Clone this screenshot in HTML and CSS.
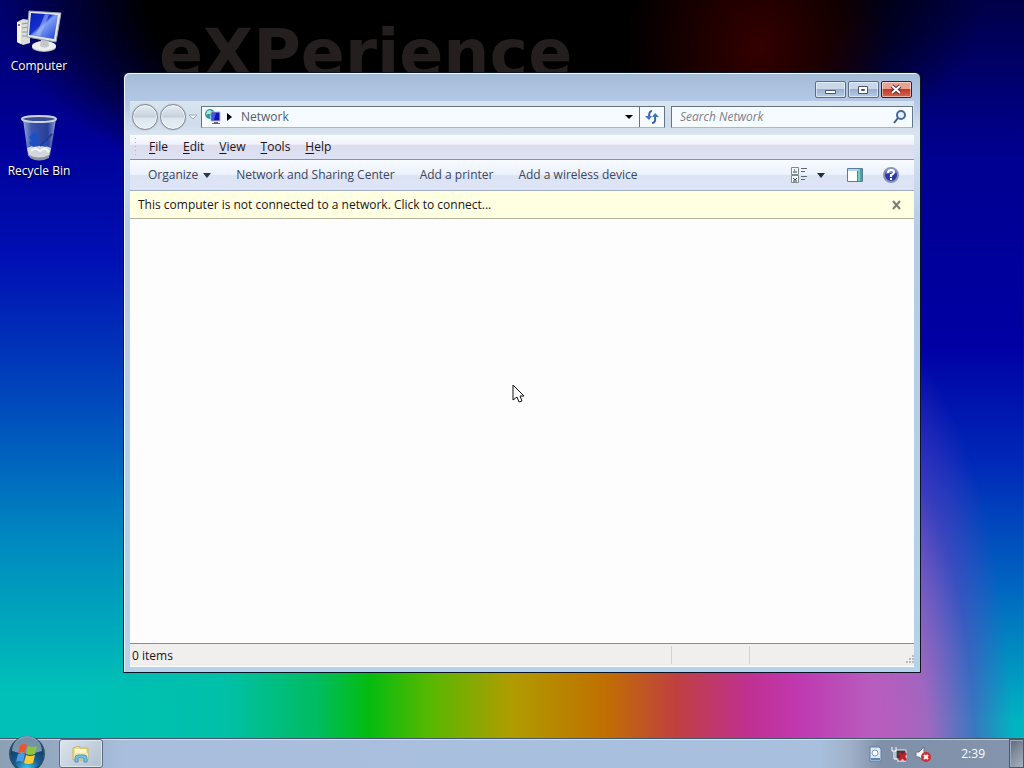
FILE: index.html
```html
<!DOCTYPE html>
<html lang="en">
<head>
  <meta charset="UTF-8" />
  <meta name="viewport" content="width=device-width, initial-scale=1.0"/>
  <title>Network</title>
  <link rel="stylesheet" href="styles.css">
</head>
<body>

  <main class="desktop">
    <div class="wordmark">eXPerience</div>

    <!-- Desktop icons -->
    <nav class="shortcuts">
      <a class="shortcut" href="#computer">
        <svg width="48" height="48" viewBox="0 0 48 48">
          <defs>
            <linearGradient id="screen" x1="0" y1="0" x2="1" y2="1">
              <stop offset="0" stop-color="#0a1cb0"/>
              <stop offset=".42" stop-color="#1430d0"/>
              <stop offset=".5" stop-color="#7fa0f4"/>
              <stop offset="1" stop-color="#1a3ad8"/>
            </linearGradient>
          </defs>
          <path d="M2 12l6-3 7 1v23l-7 2-6-3z" fill="#d9dcda"/>
          <path d="M2 12l4 1v21l-4-2z" fill="#f4f4ee"/>
          <path d="M7 14l6-1M7 18l6-1M7 22h6M7 26h6" stroke="#94989c"/>
          <circle cx="4" cy="15" r="1" fill="#444"/>
          <ellipse cx="29" cy="37" rx="12" ry="5" fill="#a9adb2"/>
          <ellipse cx="29" cy="36" rx="12" ry="5" fill="#eceeed"/>
          <path d="M26 29h7l1 7q-4 3-9 0z" fill="#c3c7ca"/>
          <path d="M14 1l32 2-5 29-29-5z" fill="#e4e7e8" stroke="#9ba0a8"/>
          <path d="M16 3l27 2-4 24-25-4z" fill="url(#screen)"/>
          <path d="M30 4l4 1-9 21-4-1z" fill="#a9c0f8" opacity=".55"/>
        </svg>
        <span>Computer</span>
      </a>
      <a class="shortcut" href="#recycle">
        <svg width="48" height="48" viewBox="0 0 48 48">
          <defs>
            <linearGradient id="bin">
              <stop offset="0" stop-color="#a8bce4"/>
              <stop offset=".25" stop-color="#4460b4"/>
              <stop offset=".75" stop-color="#2c4698"/>
              <stop offset="1" stop-color="#a0b2dc"/>
            </linearGradient>
          </defs>
          <path d="M8 4l5 37q11 6 22 0l6-37z" fill="url(#bin)" opacity=".9"/>
          <path d="M12 33q12-6 24 0l-2 8q-10 6-20 0z" fill="#d3d6dc"/>
          <path d="M14 40q10 5 20 0v3q-10 5-19 0z" fill="#8f959e"/>
          <path d="M16 36l4-3 5 3 5-3 4 4" fill="none" stroke="#f4f5f7" stroke-width="2"/>
          <path d="M14 22l5-5 6 5-3 3 3 6-7 1-4-4 3-2zM26 27l5-4 3 4-3 5-5-1z" fill="#1d50c4"/>
          <path d="M37 19L25 31" stroke="#203c90" stroke-width="2"/>
          <ellipse cx="24" cy="4" rx="17" ry="3" fill="#3a4f90" stroke="#cfd3da" stroke-width="2"/>
        </svg>
        <span>Recycle Bin</span>
      </a>
    </nav>

    <!-- Explorer window -->
    <section class="window">
      <header class="titlebar">
        <button class="caption" type="button" aria-label="Minimize">
          <svg width="30" height="16" viewBox="0 0 30 16"><path d="M10.500 8.500h10v3h-10z" fill="#fff" stroke="#4a5468"/></svg>
        </button>
        <button class="caption" type="button" aria-label="Maximize">
          <svg width="30" height="16" viewBox="0 0 30 16"><path d="M10.500 4.500h9v7h-9zM13.500 7.500v1h3v-1z" fill="#fff" fill-rule="evenodd" stroke="#4a5468"/></svg>
        </button>
        <button class="caption close" type="button" aria-label="Close">
          <svg width="30" height="16" viewBox="0 0 30 16"><path d="M11 4l8 7M19 4l-8 7" stroke="#5a2a30" stroke-width="4"/><path d="M11 4l8 7M19 4l-8 7" stroke="#fff" stroke-width="2"/></svg>
        </button>
      </header>

      <div class="pane">
        <form class="navbar">
          <div class="history">
            <button class="round" type="button" aria-label="Back"></button>
            <button class="round" type="button" aria-label="Forward"></button>
            <button class="plain" type="button" aria-label="Recent pages">
              <svg width="10" height="8" viewBox="0 0 10 8"><path d="M1 2h8L5 6z" fill="#eef3f7" stroke="#a3afba"/></svg>
            </button>
          </div>
          <div class="address">
            <svg width="18" height="18" viewBox="0 0 18 18">
              <circle cx="6" cy="6" r="5" fill="#2a9aa8"/>
              <path d="M3 3l3-1 2 2-2 2H4l-2 1zM6 8l3-1 1 2-3 2z" fill="#a8ecc8"/>
              <path d="M7 4h9v9H7z" fill="#1414b4" stroke="#b8c0d4"/>
              <path d="M8 5h4l-2 7H8z" fill="#3a58e8"/>
              <path d="M10 14h4v1h2v1H8v-1h2z" fill="#667"/>
            </svg>
            <button class="plain" type="button" aria-label="Locations">
              <svg width="14" height="14" viewBox="0 0 14 14"><path d="M5 3l5 4-5 4z" fill="#000"/></svg>
            </button>
            <a class="crumb" href="#network">Network</a>
            <button class="plain drop" type="button" aria-label="Previous locations">
              <svg width="12" height="12" viewBox="0 0 12 12"><path d="M2 4h8L6 8z" fill="#000"/></svg>
            </button>
            <button class="plain refresh" type="button" aria-label="Refresh">
              <svg width="16" height="16" viewBox="0 0 16 16"><path d="M8 2Q5 2 5 8M8 14q4 0 3-6" fill="none" stroke="#3a62a0" stroke-width="2"/><path d="M1 7h7l-3 4zM8 8h7l-4-4z" fill="#3f74b8"/></svg>
            </button>
          </div>
          <div class="search">
            <input type="text" id="search" placeholder="Search Network" aria-label="Search Network">
            <button class="plain" type="button" aria-label="Search">
              <svg width="16" height="16" viewBox="0 0 16 16"><circle cx="9" cy="6" r="4" fill="#e8f2fc" stroke="#46689c" stroke-width="2"/><path d="M6 9l-4 5" stroke="#3c5a88" stroke-width="2"/></svg>
            </button>
          </div>
        </form>

        <nav class="menubar">
          <button type="button"><u>F</u>ile</button>
          <button type="button"><u>E</u>dit</button>
          <button type="button"><u>V</u>iew</button>
          <button type="button"><u>T</u>ools</button>
          <button type="button"><u>H</u>elp</button>
        </nav>

        <div class="toolbar">
          <button type="button">Organize
            <svg width="8" height="5" viewBox="0 0 8 5"><path d="M0 0h8L4 5z" fill="#26364f"/></svg>
          </button>
          <button type="button">Network and Sharing Center</button>
          <button type="button">Add a printer</button>
          <button type="button">Add a wireless device</button>
          <div class="tools">
            <button type="button" aria-label="Change your view">
              <svg width="16" height="16" viewBox="0 0 16 16">
                <path d="M.5.5h7v7h-7zM.5 8.500h7v7h-7z" fill="#f4f8f6" stroke="#7b8c8c"/>
                <path d="M2 5h4M3 3h1M2 11l2 2 2-2M2 14h4" stroke="#333f4c" fill="none"/>
                <path d="M10 1.500h6M10 4.500h4M10 9.500h6M10 12.500h4" stroke="#5a6878"/>
              </svg>
            </button>
            <button type="button" aria-label="More options">
              <svg width="8" height="5" viewBox="0 0 8 5"><path d="M0 0h8L4 5z" fill="#1c2c44"/></svg>
            </button>
            <button class="preview" type="button" aria-label="Show the preview pane">
              <svg width="16" height="14" viewBox="0 0 16 14"><path d="M.5.5h15v13H.5z" fill="#fff" stroke="#5b7c98"/><path d="M1 1h14v2H1z" fill="#b9d2e4"/><path d="M10.500 3v10" stroke="#5b7c98"/><path d="M11 1h4v12h-4z" fill="#7accc4"/><path d="M13 1h2v12h-2z" fill="#48a4a4"/></svg>
            </button>
            <button type="button" aria-label="Get help">
              <svg width="16" height="16" viewBox="0 0 16 16"><circle cx="8" cy="8" r="7" fill="#2a3ca8" stroke="#8994b8" stroke-width="2"/><path d="M3 7a5 5 0 0110-1Q8 5 3 7z" fill="#7c90e0"/><path d="M5 6q0-3 3-3t3 2q0 2-3 3v2M8 11v2" fill="none" stroke="#fff" stroke-width="2"/></svg>
            </button>
          </div>
        </div>

        <div class="infobar">
          <a href="#connect">This computer is not connected to a network. Click to connect...</a>
          <button class="plain" type="button" aria-label="Dismiss">
            <svg width="10" height="10" viewBox="0 0 10 10"><path d="M1 1l7 8M8 1L1 9" stroke="#7d7d72" stroke-width="2"/></svg>
          </button>
        </div>

        <div class="files"></div>

        <footer class="statusbar">
          <span>0 items</span>
          <span></span>
          <span class="grip">
            <svg width="9" height="9" viewBox="0 0 9 9"><path d="M7 0h2v2H7zM4 3h2v2H4zM7 3h2v2H7zM1 6h2v2H1zM4 6h2v2H4zM7 6h2v2H7z" fill="#bdb9b9"/></svg>
          </span>
        </footer>
      </div>
    </section>

    <svg class="pointer" width="14" height="20" viewBox="0 0 14 20"><path d="M1 1v15l4-3 2 5 3-1-2-5h4z" fill="#fff" stroke="#111"/></svg>
  </main>

  <!-- Taskbar -->
  <footer class="taskbar">
    <button class="start" type="button" aria-label="Start">
      <svg width="38" height="38" viewBox="0 0 38 38">
        <defs>
          <radialGradient id="orb" cx=".5" cy=".95" r=".85">
            <stop offset="0" stop-color="#3cd0f0"/>
            <stop offset=".45" stop-color="#1a5c94"/>
            <stop offset="1" stop-color="#123054"/>
          </radialGradient>
        </defs>
        <circle cx="19" cy="19" r="17" fill="url(#orb)" stroke="#24506c" stroke-width="2"/>
        <path d="M4 16a15 15 0 0130 0q-15 5-30 0z" fill="#c8dcea" opacity=".55"/>
        <path d="M12 10q4-2 7 0l-2 8q-3-2-7 0z" fill="#e8582c"/>
        <path d="M20 11q4 2 9 0l-2 8q-5 2-9 0z" fill="#8cc43c"/>
        <path d="M10 19q4-2 7 0l-2 8q-4-2-7 0z" fill="#4c9ce4"/>
        <path d="M18 20q4 2 9 0l-2 8q-5 2-9 0z" fill="#fccc34"/>
      </svg>
    </button>
    <button class="task" type="button" aria-label="Explorer">
      <svg width="18" height="18" viewBox="0 0 18 18">
        <path d="M1 3l6-2 1 2h8v12H1z" fill="#f0dc8c" stroke="#cdb560"/>
        <path d="M3 4h11v4H3z" fill="#fff8cc"/>
        <path d="M2 8h14v6H2z" fill="#f8e69c"/>
        <path d="M3 17v-4q0-3 3-3h6q3 0 3 3v4h-3v-4H6v4z" fill="#74c0e4" stroke="#4a98c4"/>
      </svg>
    </button>
    <div class="tray">
      <svg width="16" height="16" viewBox="0 0 16 16"><path d="M3 1h9l2 2v12H3z" fill="#dce8f4" stroke="#5f7ca4"/><path d="M4 12h9v2H4z" fill="#5c84bc"/><circle cx="8" cy="7" r="3" fill="#fff" stroke="#7c9cc4"/></svg>
      <svg width="16" height="16" viewBox="0 0 16 16"><path d="M5 4h10v9H5z" fill="#333c44" stroke="#f0f0f0"/><path d="M1 1v4h4V1M3 5v8h3" fill="none" stroke="#fff"/><path d="M6 15h9" stroke="#fff"/><path d="M8 7l7 7M15 7l-7 7" stroke="#c81c24" stroke-width="3"/></svg>
      <svg width="16" height="16" viewBox="0 0 16 16"><path d="M1 6h3l5-5v14l-5-4H1z" fill="#f4f6f8" stroke="#687484"/><circle cx="11" cy="11" r="5" fill="#d42c30"/><path d="M9 9l4 4M13 9l-4 4" stroke="#fff" stroke-width="2"/></svg>
    </div>
    <time class="clock">2:39</time>
    <button class="peek" type="button" aria-label="Show desktop"></button>
  </footer>

</body>
</html>
```

FILE: styles.css
```css
* {
  box-sizing: border-box;
}
body {
  margin: 0;
  height: 100vh;
  overflow: hidden;
  display: flex;
  flex-direction: column;
  font-family: "Open Sans", "Noto Sans", sans-serif;
  font-size: 12px;
  line-height: 16px;
  color: #1c1420;
  background:
    radial-gradient(ellipse 13% 20% at 74% 6%, #340000 0%, rgba(44, 0, 0, 0.7) 40%, transparent 100%),
    radial-gradient(ellipse 48% 30% at 48% 0%, #000 70%, transparent 100%),
    linear-gradient(90deg, transparent 8%, #00c0a8 22%, #00bc60 31%, #04bc10 36%, #58b800 42%, #b09c00 50%, #c07000 59%, #c04040 66%, #c03090 73%, #c038b0 78%, rgba(184, 92, 192, 0.8) 85%, transparent 90%) bottom / 100% 100px no-repeat,
    radial-gradient(ellipse 15% 58% at 84% 100%, #c058b8 0%, rgba(176, 96, 192, 0.9) 45%, rgba(112, 60, 192, 0.5) 75%, transparent 100%),
    linear-gradient(#000048 0%, #000090 20%, #0000a4 45%, #0028b8 60%, #0064c0 76%, #00b4c0 94%) right / 20% 100% no-repeat,
    linear-gradient(#00006c 0%, #000098 18%, #0010b4 34%, #0048bc 52%, #0088c0 70%, #00c0b8 90%);
}
button {
  font: inherit;
  color: inherit;
  cursor: pointer;
}
svg {
  display: block;
  flex: none;
}
a {
  color: inherit;
  text-decoration: none;
}
.desktop {
  position: relative;
  flex: 1;
}
.wordmark {
  position: absolute;
  left: 159px;
  top: 21px;
  font: bold 65px/65px "DejaVu Sans", sans-serif;
  color: #241e1e;
}

/* Desktop icons */
.shortcuts {
  display: flex;
  flex-direction: column;
  gap: 41px;
  width: 78px;
  padding-top: 10px;
}
.shortcut {
  display: flex;
  flex-direction: column;
  align-items: center;
  color: #fff;
  text-shadow: 1px 1px 2px #000;
  white-space: nowrap;
}

/* Window */
.window {
  position: absolute;
  left: 123px;
  right: 103px;
  top: 72px;
  bottom: 65px;
  display: flex;
  flex-direction: column;
  padding: 0 6px 5px;
  border: 1px solid #0c1424;
  border-radius: 6px 6px 0 0;
  background: linear-gradient(#a4bcd8 0, #b4c8e6 30px, #d8e4f0 60px, #c8d8ee 110px, #b4cce6 150px, #b4d2ea 100%);
  box-shadow: inset 1px 1px #f0f6fc;
}
.titlebar {
  display: flex;
  justify-content: flex-end;
  gap: 2px;
  height: 28px;
  padding: 8px 2px 0;
}
.caption {
  width: 31px;
  height: 17px;
  padding: 0;
  border: 1px solid #5c6c84;
  border-radius: 2px;
  background: linear-gradient(#c8d8ea 45%, #98b0d0 50%, #b8cce4);
  box-shadow: inset 0 0 0 1px rgba(255, 255, 255, 0.5);
}
.caption svg {
  margin: -1px;
}
.close {
  border-color: #481820;
  background: linear-gradient(#e8a090 45%, #c03828 50%, #d86850);
}
.pane {
  flex: 1;
  display: flex;
  flex-direction: column;
  min-height: 0;
}
.plain {
  display: flex;
  align-items: center;
  justify-content: center;
  padding: 0;
  border: 0;
  background: none;
}

/* Back, forward, address and search */
.navbar {
  display: flex;
  align-items: center;
  height: 34px;
  padding: 0 1px 2px 2px;
  background: linear-gradient(#d8e4ee, #d0dcea 70%, #dce6f2);
}
.history {
  display: flex;
  align-items: center;
  gap: 2px;
  width: 69px;
}
.round {
  width: 26px;
  height: 26px;
  border: 1px solid #7c8894;
  border-radius: 50%;
  background: linear-gradient(#e8eef2, #c4d0dc 50%, #dce6ee 55%, #e8f0f4);
  box-shadow: inset 0 0 0 1px #f4f8fa, 0 0 1px #8894a0;
}
.address {
  flex: 1;
  display: flex;
  align-items: center;
  height: 22px;
  padding-left: 2px;
  border: 1px solid #647484;
  border-bottom-color: #a8b8c8;
  background: #f6fbff;
  color: #545c68;
}
.crumb {
  flex: 1;
  padding-left: 5px;
}
.drop {
  width: 20px;
  height: 20px;
}
.refresh {
  width: 25px;
  height: 20px;
  border-left: 1px solid #647484;
}
.search {
  display: flex;
  align-items: center;
  width: 242px;
  height: 22px;
  margin-left: 6px;
  padding-right: 4px;
  border: 1px solid #647484;
  border-bottom-color: #a8b8c8;
  background: #f6fbff;
}
.search input {
  flex: 1;
  min-width: 0;
  padding: 0 8px;
  border: 0;
  outline: 0;
  background: none;
  font: inherit;
}
.search input::placeholder {
  color: #7c8088;
  font-style: italic;
  opacity: 1;
}

/* Menu bar */
.menubar {
  display: flex;
  align-items: center;
  gap: 15px;
  height: 25px;
  padding-left: 19px;
  border-bottom: 1px solid #8890a4;
  background:
    repeating-linear-gradient(#b4b4c4 0 1px, transparent 1px 4px) 5px 3px / 1px 18px no-repeat,
    linear-gradient(#fafcff, #f0f2fc 38%, #dcdcee 44%, #dee2f2);
}
.menubar button {
  padding: 0;
  border: 0;
  background: none;
}
.menubar u {
  text-underline-offset: 2px;
}

/* Command bar */
.toolbar {
  display: flex;
  align-items: center;
  gap: 25px;
  height: 31px;
  padding: 0 15px 0 18px;
  border-bottom: 1px solid #a0acc0;
  background: linear-gradient(#f8fbff, #ecf2fc 48%, #dce4f4 52%, #dce4f6);
  color: #3c4660;
}
.toolbar button {
  display: flex;
  align-items: center;
  gap: 5px;
  padding: 0;
  border: 0;
  background: none;
  white-space: nowrap;
}
.tools {
  display: flex;
  align-items: center;
  gap: 10px;
  margin-left: auto;
}
.tools .preview {
  margin: 0 10px 0 12px;
}

.infobar {
  display: flex;
  align-items: center;
  justify-content: space-between;
  height: 28px;
  padding: 0 12px 0 8px;
  border-bottom: 1px solid #b4b49c;
  background: #ffffe1;
}
.files {
  flex: 1;
  background: #fdfdfd;
}

/* Status bar */
.statusbar {
  display: flex;
  height: 24px;
  padding: 2px 0;
  border-top: 1px solid #8c8c8c;
  border-bottom: 1px solid #fff;
  background: #f1efee;
}
.statusbar span {
  width: 78px;
  padding: 2px;
  border-right: 1px solid #d4d0d0;
}
.statusbar span:first-child {
  flex: 1;
}
.statusbar .grip {
  display: flex;
  align-items: flex-end;
  justify-content: flex-end;
  width: 164px;
  padding: 0;
  border: 0;
}
.pointer {
  position: absolute;
  left: 50%;
  top: 384px;
}

/* Taskbar */
.taskbar {
  display: flex;
  align-items: center;
  height: 30px;
  border-top: 1px solid #44586c;
  background:
    linear-gradient(rgba(255, 255, 255, 0.5) 1px, transparent 1px),
    linear-gradient(90deg, #8ca0b4 0%, #94a8c0 5%, #a8bedc 12%, #a8c0de 80%, #a0b0c8 83%, #8090a8 86%, #8494ac 100%);
}
.start {
  width: 38px;
  height: 38px;
  margin: 0 13px 0 8px;
  padding: 0;
  border: 0;
  background: none;
}
.task {
  display: flex;
  align-items: center;
  justify-content: center;
  width: 44px;
  height: 29px;
  padding: 0;
  border: 1px solid #5c6c80;
  border-radius: 3px;
  background: linear-gradient(135deg, #dce4ea, #b0c0d0);
  box-shadow: inset 0 0 0 1px #dce6ee;
}
.tray {
  display: flex;
  gap: 8px;
  margin-left: auto;
}
.clock {
  padding: 0 24px 0 30px;
  color: #fff;
}
.peek {
  width: 15px;
  height: 29px;
  padding: 0;
  border: 1px solid #4c5868;
  background: linear-gradient(135deg, #5c6878, #8490a0 50%, #a4b0c0);
  box-shadow: inset 1px 1px #a0acbc;
}
```
